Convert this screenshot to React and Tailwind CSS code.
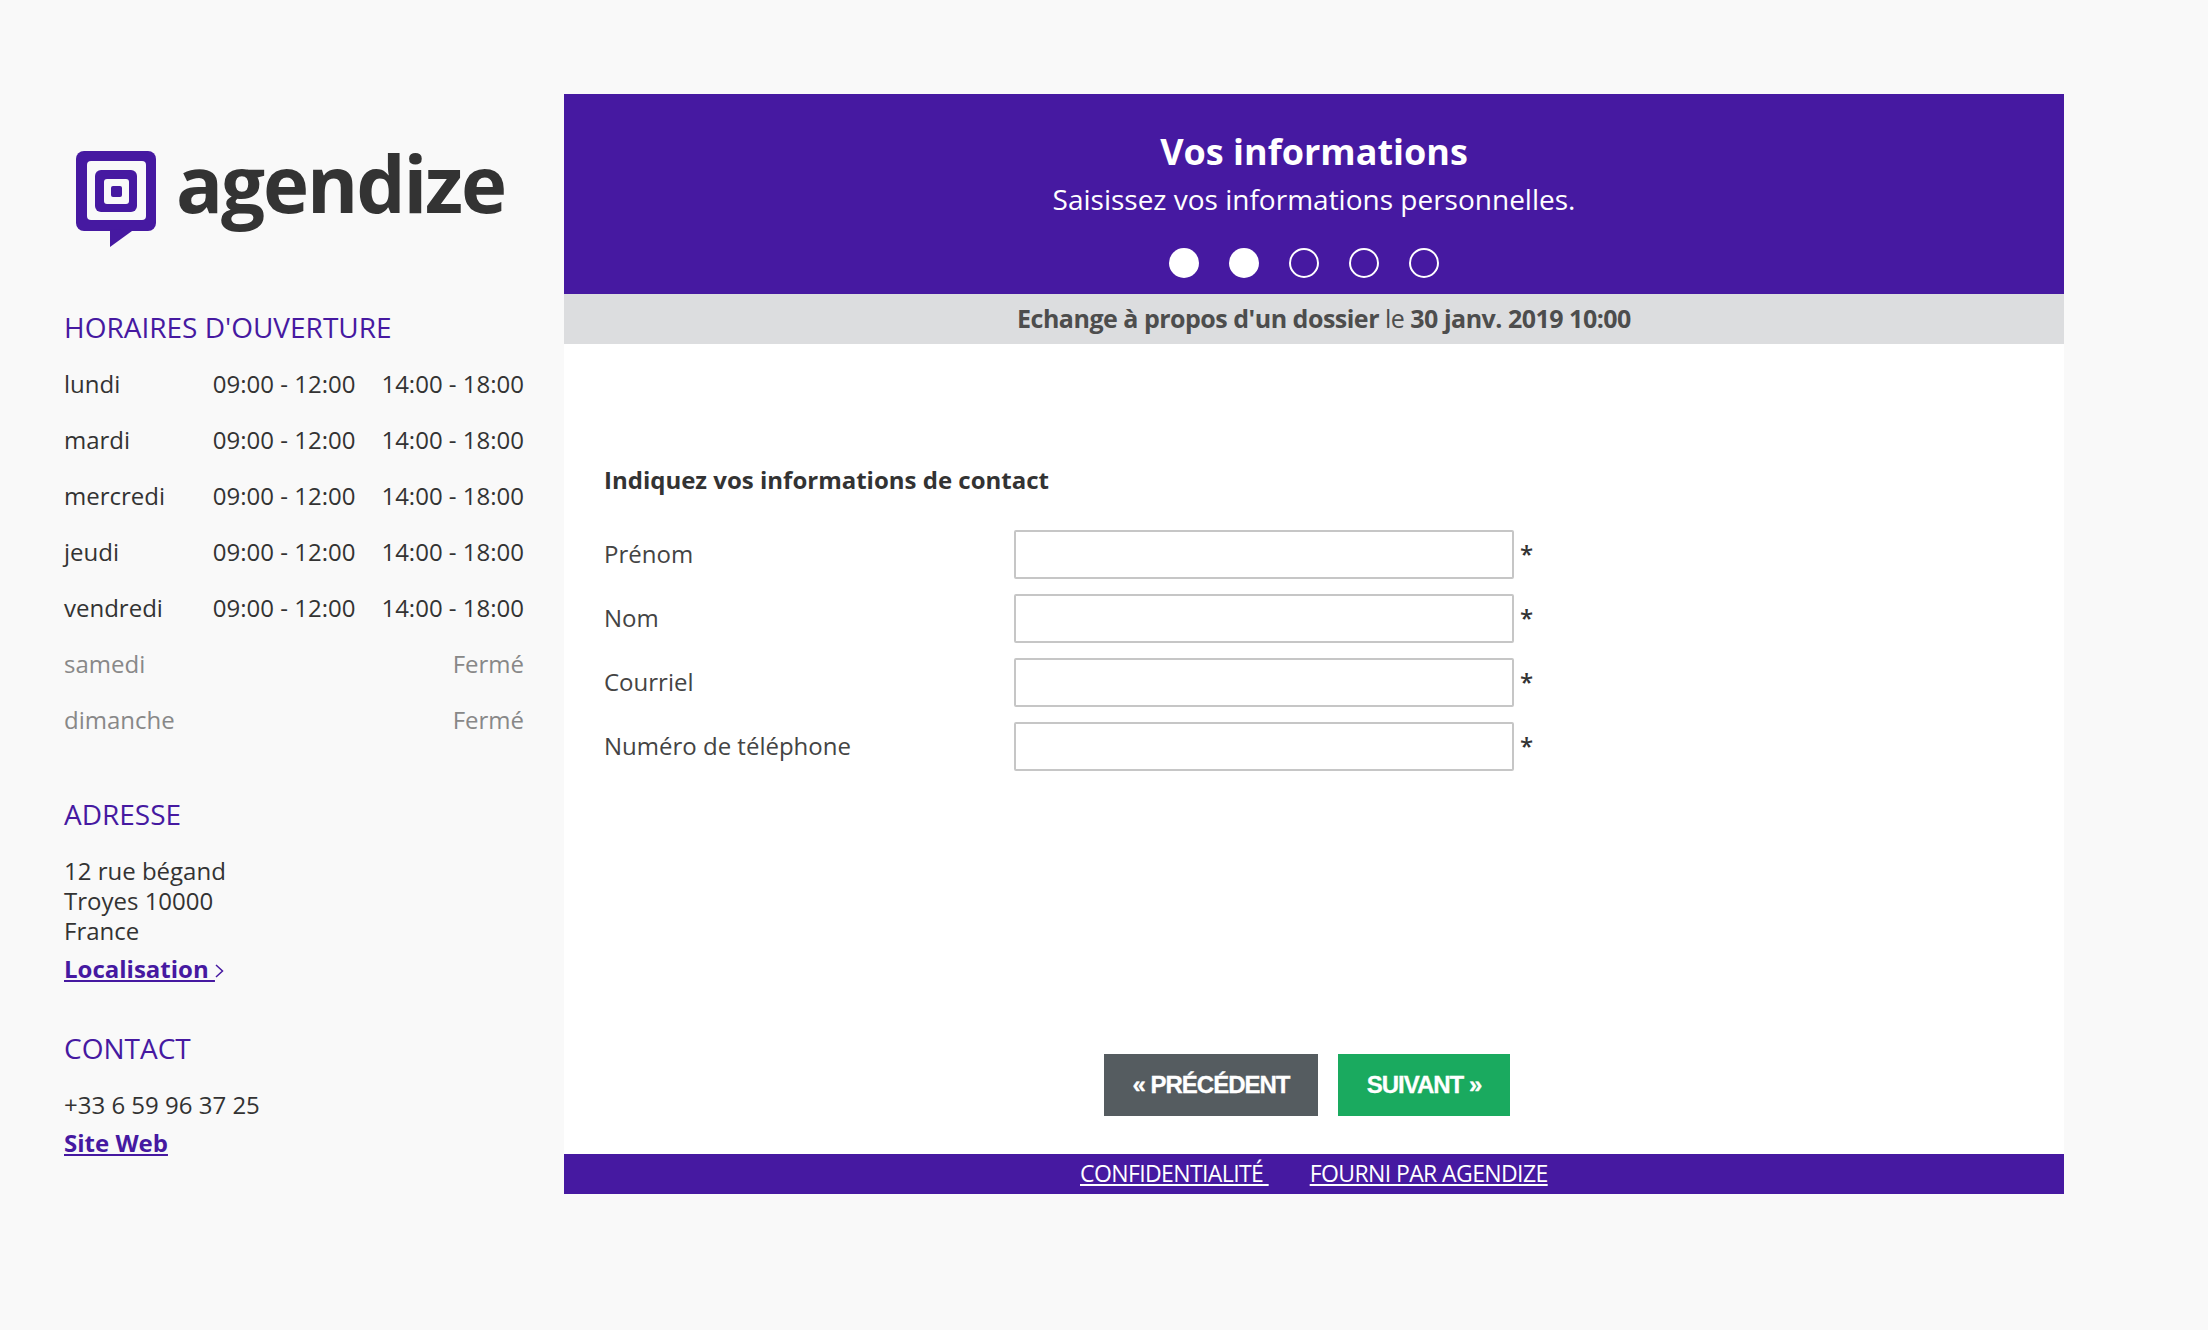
const hours = [
  { day: 'lundi', am: '09:00 - 12:00', pm: '14:00 - 18:00' },
  { day: 'mardi', am: '09:00 - 12:00', pm: '14:00 - 18:00' },
  { day: 'mercredi', am: '09:00 - 12:00', pm: '14:00 - 18:00' },
  { day: 'jeudi', am: '09:00 - 12:00', pm: '14:00 - 18:00' },
  { day: 'vendredi', am: '09:00 - 12:00', pm: '14:00 - 18:00' },
  { day: 'samedi' },
  { day: 'dimanche' },
];

const fields = ['Prénom', 'Nom', 'Courriel', 'Numéro de téléphone'];

function Logo() {
  return (
    <div className="ml-[12px] flex items-start h-[96px]">
      <svg width="80" height="96" viewBox="0 0 80 96" className="shrink-0">
        <rect width="80" height="80" rx="8" fill="#4619a1" />
        <path d="M34 78 V96 L56 80 Z" fill="#4619a1" />
        <rect x="11" y="10" width="59" height="59" rx="4" fill="#f9f9f9" />
        <rect x="19" y="19" width="42" height="42" rx="6" fill="#4619a1" />
        <rect x="28" y="28" width="25" height="25" rx="3" fill="#f9f9f9" />
        <rect x="35" y="35" width="11" height="11" rx="2" fill="#4619a1" />
      </svg>
      <span className="ml-[20px] mt-[-18px] text-[78px] leading-[100px] font-bold tracking-[-2.1px] text-[#333]">
        agendize
      </span>
    </div>
  );
}

function SectionTitle({ children, className }) {
  return <h2 className={`text-[28px] leading-[38px] text-[#4619a1] ${className}`}>{children}</h2>;
}

function Sidebar() {
  return (
    <aside className="w-[564px] shrink-0 pt-[151px] pl-[64px] text-[24px] text-[#333]">
      <Logo />
      <SectionTitle className="mt-[61px]">HORAIRES D'OUVERTURE</SectionTitle>
      <div className="mt-[10px] w-[460px] grid grid-cols-[1fr_auto_auto] gap-x-[26px]">
        {hours.map((row) =>
          row.am ? (
            <div key={row.day} className="contents">
              <div className="h-[56px] leading-[56px]">{row.day}</div>
              <div className="h-[56px] leading-[56px]">{row.am}</div>
              <div className="h-[56px] leading-[56px]">{row.pm}</div>
            </div>
          ) : (
            <div key={row.day} className="contents text-[#888]">
              <div className="h-[56px] leading-[56px]">{row.day}</div>
              <div className="col-span-2 h-[56px] leading-[56px] text-right">Fermé</div>
            </div>
          )
        )}
      </div>

      <SectionTitle className="mt-[47px]">ADRESSE</SectionTitle>
      <div className="mt-[23px] leading-[30px]">
        <div>12 rue bégand</div>
        <div>Troyes 10000</div>
        <div>France</div>
      </div>
      <div className="mt-[8px] flex items-center leading-[30px] font-bold text-[#4619a1]">
        <a href="#" className="underline whitespace-pre">Localisation </a>
        <svg width="9" height="14" viewBox="0 0 9 14" fill="none" stroke="#4619a1" strokeWidth="1.5" className="mt-[3px]">
          <path d="M1 1 L7.5 7 L1 13" />
        </svg>
      </div>

      <SectionTitle className="mt-[45px]">CONTACT</SectionTitle>
      <div className="mt-[23px] leading-[30px]">+33 6 59 96 37 25</div>
      <a href="#" className="mt-[8px] inline-block leading-[30px] font-bold text-[#4619a1] underline">
        Site Web
      </a>
    </aside>
  );
}

function Steps() {
  return (
    <div className="mt-[27px] pr-[21px] flex justify-center gap-[30px]">
      {[true, true, false, false, false].map((done, i) => (
        <span
          key={i}
          className={done ? 'w-[30px] h-[30px] rounded-full bg-white' : 'w-[30px] h-[30px] rounded-full border-2 border-white'}
        />
      ))}
    </div>
  );
}

function Main() {
  return (
    <main className="w-[1500px] shrink-0 self-start mt-[94px] bg-white">
      <header className="h-[200px] bg-[#4619a1] pt-[35px] text-center text-white">
        <h1 className="text-[36px] leading-[46px] font-bold">Vos informations</h1>
        <p className="mt-[2px] text-[28px] leading-[44px]">Saisissez vos informations personnelles.</p>
        <Steps />
      </header>
      <div className="h-[50px] bg-[#dcdddf] pl-[20px] text-center text-[25px] leading-[48px] tracking-[-0.5px] text-[#4d4d4d]">
        <b>Echange à propos d'un dossier</b> le <b>30 janv. 2019 10:00</b>
      </div>

      <section className="h-[810px] flex flex-col pl-[40px]">
        <h3 className="mt-[116px] text-[24px] leading-[40px] font-bold text-[#333]">
          Indiquez vos informations de contact
        </h3>
        <form className="mt-[30px] flex flex-col gap-[15px]">
          {fields.map((label) => (
            <div key={label} className="flex items-center h-[49px]">
              <label className="w-[410px] -mt-[1px] text-[24px] text-[#444]">{label}</label>
              <input type="text" className="w-[500px] h-[49px] bg-white border-2 border-[#c6c6c6] rounded-[2px]" />
              <span className="ml-[6px] -mt-[2px] text-[24px] font-semibold text-[#333]">*</span>
            </div>
          ))}
        </form>
        <div className="mt-[283px] ml-[500px] flex gap-[20px] font-['Liberation_Sans',sans-serif] text-[24px] font-bold tracking-[-1px] text-white [-webkit-text-stroke:0.3px_white]">
          <button type="button" className="w-[214px] h-[62px] bg-[#555c60]">« PRÉCÉDENT</button>
          <button type="button" className="w-[172px] h-[62px] bg-[#1aaa5f]">SUIVANT »</button>
        </div>
      </section>

      <footer className="h-[40px] bg-[#4619a1] pl-[516px] flex gap-[41px] text-[23px] leading-[38px] tracking-[-0.6px] text-white">
        <a href="#" className="underline">CONFIDENTIALITÉ&nbsp;</a>
        <a href="#" className="underline">FOURNI PAR AGENDIZE</a>
      </footer>
    </main>
  );
}

export default function App() {
  return (
    <div className="min-h-[1330px] flex bg-[#f9f9f9] font-['Open_Sans',sans-serif]">
      <Sidebar />
      <Main />
    </div>
  );
}
